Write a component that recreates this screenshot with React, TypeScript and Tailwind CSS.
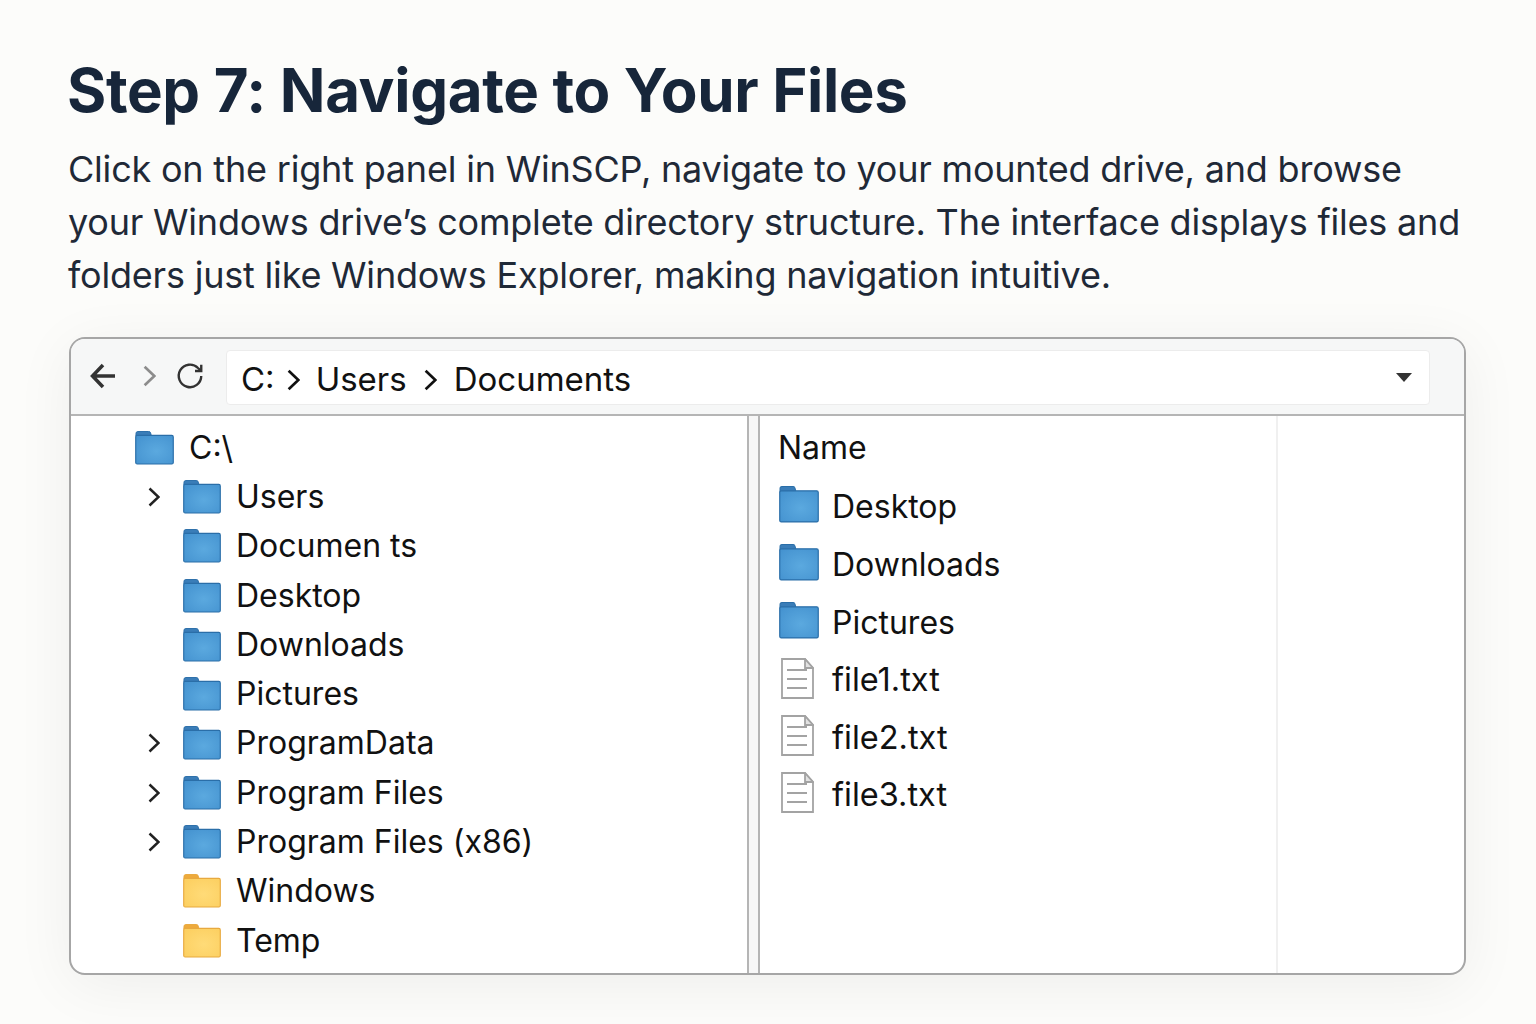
import { useId } from "react";

function Folder({ yellow = false, className = "" }: { yellow?: boolean; className?: string }) {
  const id = useId();
  const inner = yellow ? "#ffdb78" : "#5ba9df";
  const outer = yellow ? "#fccf60" : "#4593d0";
  const tab = yellow ? "#eeaa3c" : "#3a7db8";
  const line = yellow ? "#e8a93f" : "#2a6ea8";
  return (
    <svg viewBox="0 1.500 40 34.500" preserveAspectRatio="none" className={className}>
      <defs>
        <radialGradient id={id} cx="55%" cy="55%" r="70%">
          <stop offset="0%" stopColor={inner} />
          <stop offset="100%" stopColor={outer} />
        </radialGradient>
      </defs>
      <path d="M1 4a2 2 0 0 1 2-2h11a2 2 0 0 1 2 1.500L17 7H1z" fill={tab} stroke={line} strokeWidth="1" />
      <rect x="0.750" y="6" width="38.500" height="29" rx="1.500" fill={`url(#${id})`} stroke={line} strokeWidth="1.200" />
    </svg>
  );
}

function FileIcon() {
  return (
    <svg viewBox="0 0 33 41" className="mb-[5px] h-[41px] w-[33px] shrink-0" fill="none" stroke="#a3a3a3" strokeWidth="1.800">
      <path d="M1 1h23l8 9v30H1z" fill="#fff" />
      <path d="M24 1l8 9h-8z" fill="#e2e2e2" />
      <path d="M6 12h20M6 21h20M6 30h20" />
    </svg>
  );
}

function Chevron({ className = "", width = 2.500 }: { className?: string; width?: number }) {
  return (
    <svg viewBox="0 0 12 20" className={className} fill="none" stroke="currentColor" strokeWidth={width}>
      <path d="M1.500 1.500 10.500 10l-9 8.500" />
    </svg>
  );
}

const tree = [
  { name: "Users", arrow: true },
  { name: "Documents" },
  { name: "Desktop" },
  { name: "Downloads" },
  { name: "Pictures" },
  { name: "ProgramData", arrow: true },
  { name: "Program Files", arrow: true },
  { name: "Program Files (x86)", arrow: true },
  { name: "Windows", yellow: true },
  { name: "Temp", yellow: true },
];

export default function App() {
  return (
    <div className="h-[1024px] w-[1536px] overflow-hidden bg-[#fcfcfa] px-[69px] pt-[56px] font-['Inter',sans-serif] text-[#111]">
      <h1 className="-ml-[2px] text-[60px] leading-[68px] font-bold tracking-[-0.35px] whitespace-nowrap text-[#17263a]">
        Step 7: Navigate to Your Files
      </h1>
      <p className="mt-[19px] -ml-[1px] text-[36px] leading-[53px] tracking-[-0.2px] whitespace-nowrap text-[#1f2937]">
        Click on the right panel in WinSCP, navigate to your mounted drive, and browse
        <br />
        your Windows drive’s complete directory structure. The interface displays files and
        <br />
        folders just like Windows Explorer, making navigation intuitive.
      </p>

      <div className="mt-[35px] h-[638px] w-[1397px] overflow-hidden rounded-[16px] border-2 border-[#a6a6a6] bg-white shadow-[0_10px_60px_rgba(0,0,0,0.06)]">
        <div className="flex h-[77px] items-start border-b-2 border-[#b5b5b5] bg-[#f6f7f7] pt-[11px] pl-[19px]">
          <div className="flex h-[52px] w-[136px] items-center">
            <svg viewBox="0 0 26 26" className="h-[26px] w-[26px] text-[#333]" fill="none" stroke="currentColor" strokeWidth="3.500">
              <path d="M25 13H3M13 2 2.500 13 13 24" />
            </svg>
            <Chevron className="ml-[27px] h-[22px] w-[13px] text-[#8c8c8c]" />
            <svg viewBox="0 0 24 24" className="ml-[19px] h-[30px] w-[30px] text-[#333]" fill="none" stroke="currentColor" strokeWidth="1.900">
              <path d="M21 12a9 9 0 1 1-2.600-6.400L21 8" />
              <path d="M21 3v5h-5" />
            </svg>
          </div>
          <div className="flex h-[55px] w-[1204px] items-center rounded-[4px] border border-[#ececec] bg-white pt-[5px] pr-[17px] pl-[14px] text-[33px]">
            <span>C:</span>
            <Chevron className="mr-[16px] ml-[12px] h-[24px] w-[13px]" />
            <span>Users</span>
            <Chevron className="mr-[17px] ml-[17px] h-[24px] w-[13px]" />
            <span>Documents</span>
            <span className="mb-[5px] ml-auto h-0 w-0 border-x-[8px] border-t-[9px] border-x-transparent border-t-[#333]" />
          </div>
        </div>

        <div className="flex h-[558px]">
          <div className="w-[676px] pt-[7px] text-[32px]">
            <div className="flex h-[49.300px] items-center pl-[64px]">
              <Folder className="h-[34px] w-[39px] shrink-0" />
              <span className="ml-[15px]">C:\</span>
            </div>
            {tree.map((row) => (
              <div key={row.name} className="flex h-[49.300px] items-center pl-[77px]">
                <div className="w-[35px] shrink-0">
                  {row.arrow && <Chevron className="h-[20px] w-[12px] text-[#222]" />}
                </div>
                <Folder yellow={row.yellow} className="h-[34px] w-[38px] shrink-0" />
                <span className="ml-[15px]">
                  {row.name === "Documents" ? (
                    <>
                      Documen<span className="ml-[9px]">ts</span>
                    </>
                  ) : (
                    row.name
                  )}
                </span>
              </div>
            ))}
          </div>

          <div className="w-[13px] border-x-2 border-[#b5b5b5] bg-[#f7f7f7]" />

          <div className="flex flex-1">
            <div className="w-[518px] border-r-2 border-[#f0f0f0] pt-[7px] pl-[18px] text-[32px]">
              <div className="flex h-[49px] items-center">Name</div>
              <div className="mt-[6px]">
                {["Desktop", "Downloads", "Pictures"].map((name) => (
                  <div key={name} className="flex h-[58px] items-center">
                    <Folder className="mb-[6px] ml-[1px] h-[37px] w-[40px] shrink-0" />
                    <span className="ml-[13px]">{name}</span>
                  </div>
                ))}
                {["file1.txt", "file2.txt", "file3.txt"].map((name) => (
                  <div key={name} className="flex h-[57.300px] items-center">
                    <div className="flex w-[41px] pl-[3px]">
                      <FileIcon />
                    </div>
                    <span className="ml-[13px] text-[32.500px]">{name}</span>
                  </div>
                ))}
              </div>
            </div>
          </div>
        </div>
      </div>
    </div>
  );
}
